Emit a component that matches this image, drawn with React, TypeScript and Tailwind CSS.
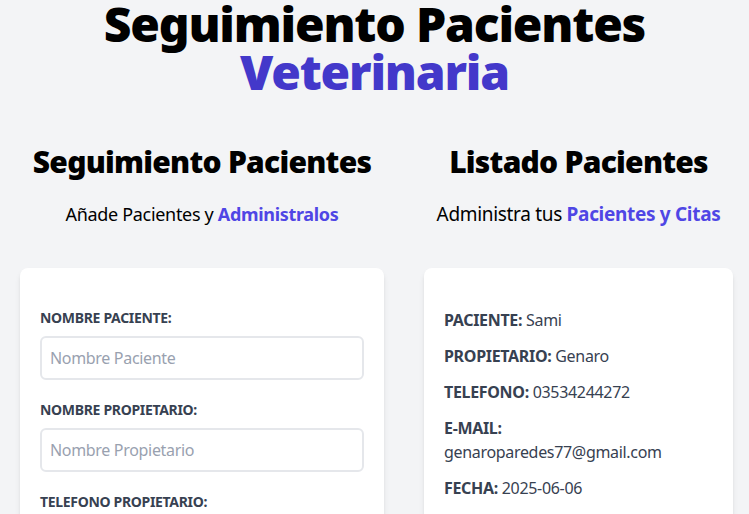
import React from 'react';

const font = { fontFamily: '"Noto Sans", "Open Sans", sans-serif' };

const Formulario = () => {
  return (
    <div className="w-[404px] shrink-0 px-5">
      <h2 className="text-3xl font-black text-center tracking-tight">Seguimiento Pacientes</h2>
      <p className="text-lg mt-5 text-center">
        Añade Pacientes y <span className="text-[#4f46e5] font-bold">Administralos</span>
      </p>
      <form className="bg-white shadow-md rounded-lg py-10 px-5 mt-10 mb-10">
        <div className="mb-5">
          <label className="block text-sm text-[#374151] uppercase font-bold">Nombre Paciente:</label>
          <input
            type="text"
            placeholder="Nombre Paciente"
            className="border-2 border-gray-200 w-full p-2 mt-2 placeholder-gray-400 rounded-md"
          />
        </div>
        <div className="mb-5">
          <label className="block text-sm text-[#374151] uppercase font-bold">Nombre Propietario:</label>
          <input
            type="text"
            placeholder="Nombre Propietario"
            className="border-2 border-gray-200 w-full p-2 mt-2 placeholder-gray-400 rounded-md"
          />
        </div>
        <div className="mb-5">
          <label className="block text-sm text-[#374151] uppercase font-bold">Telefono Propietario:</label>
          <input
            type="tel"
            placeholder="Telefono Propietario"
            className="border-2 border-gray-200 w-full p-2 mt-2 placeholder-gray-400 rounded-md"
          />
        </div>
      </form>
    </div>
  );
};

const ListadoPacientes = () => {
  const rows = [
    ['Paciente:', 'Sami'],
    ['Propietario:', 'Genaro'],
    ['Telefono:', '03534244272'],
    ['E-mail:', 'genaroparedes77@gmail.com'],
    ['Fecha:', '2025-06-06'],
  ];
  return (
    <div className="flex-1 pl-5 pr-4">
      <h2 className="text-3xl font-black text-center tracking-tight">Listado Pacientes</h2>
      <p className="text-[19px] leading-7 mt-5 text-center">
        Administra tus <span className="text-[#4f46e5] font-bold">Pacientes y Citas</span>
      </p>
      <div className="bg-white shadow-md rounded-lg py-10 px-5 mt-10 mb-10">
        {rows.map(([label, value]) => (
          <p key={label} className="font-bold mb-3 text-[#374151] uppercase">
            {label} <span className="font-normal normal-case">{value}</span>
          </p>
        ))}
      </div>
    </div>
  );
}

export default function App() {
  return (
    <div className="min-h-screen bg-gray-100 text-black overflow-hidden tracking-[-0.02em]" style={font}>
      <h1 className="text-5xl font-black text-center leading-none tracking-tight">
        Seguimiento Pacientes <span className="text-[#4338ca] block">Veterinaria</span>
      </h1>
      <div className="mt-12 flex">
        <Formulario />
        <ListadoPacientes />
      </div>
    </div>
  );
}
